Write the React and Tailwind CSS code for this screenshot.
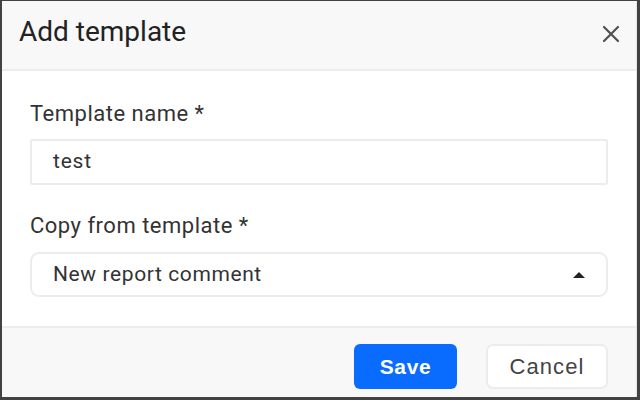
import React from "react";

export default function App() {
  return (
    <div
      className="w-[640px] h-[400px] overflow-hidden border-l-2 border-t border-r-[3px] border-b-[3px] border-[#424242] bg-white flex flex-col"
      style={{ fontFamily: "Roboto, 'Liberation Sans', sans-serif" }}
    >
      <div className="flex-1 flex flex-col border-r border-[#e6e6e6]">
        <div className="h-[70px] shrink-0 bg-[#f8f8f8] border-b-2 border-[#ececec] flex items-start justify-between pl-[17px] pr-[16px] pt-[17px]">
          <h1 className="text-[28px] text-[#222] leading-none">Add template</h1>
          <svg width="18" height="18" viewBox="0 0 18 18" className="text-[#505050] mt-[7px]">
            <path d="M2 2 L16 16 M16 2 L2 16" stroke="currentColor" strokeWidth="2.2" strokeLinecap="round" />
          </svg>
        </div>
        <div className="flex-1 flex flex-col pt-[31px] pl-[28px] pr-[28px] text-[#333]">
          <label className="text-[22px] leading-[24px] tracking-[0.5px] text-[#333]">Template name *</label>
          <div className="mt-[13px] h-[46px] border-2 border-[#ececec] rounded-[2px] flex items-center pl-[21px] text-[21px] tracking-[0.8px]">
            test
          </div>
          <label className="mt-[29px] text-[22px] leading-[24px] tracking-[0.5px] text-[#333]">Copy from template *</label>
          <div className="mt-[14px] h-[45px] border-2 border-[#ececec] rounded-[9px] flex items-center justify-between pl-[21px] pr-[21px]">
            <span className="text-[21px] tracking-[0.6px] text-[#333]">New report comment</span>
            <svg width="12" height="6" viewBox="0 0 12 6">
              <path d="M0 6 L6 0 L12 6 Z" fill="#222" />
            </svg>
          </div>
        </div>
        <div
          className="h-[71px] shrink-0 bg-[#f8f8f8] border-t-2 border-[#ececec] flex items-start justify-end gap-[29px] pt-[16px] pr-[28px]"
          style={{ fontFamily: "'Liberation Sans', Arial, sans-serif" }}
        >
          <button className="w-[103px] h-[45px] rounded-[6px] bg-[#0a6cff] text-white text-[21px] font-bold tracking-[0.6px]">
            Save
          </button>
          <button className="w-[122px] h-[45px] rounded-[7px] bg-white border-2 border-[#ececec] text-[#444] text-[22px] tracking-[1.1px]">
            Cancel
          </button>
        </div>
      </div>
    </div>
  );
}
